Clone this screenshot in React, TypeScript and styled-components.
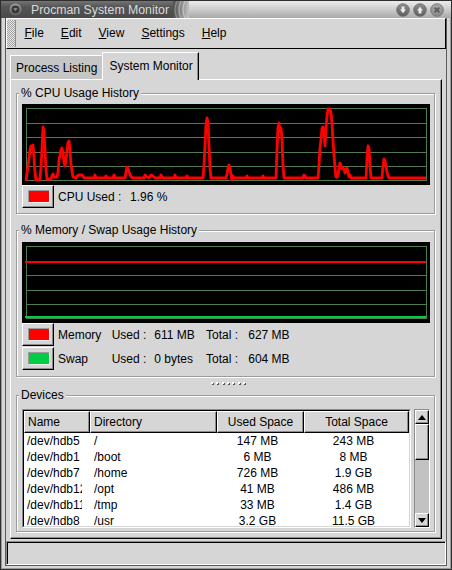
import React from "react";
import styled, { createGlobalStyle } from "styled-components";

const BG = "#d6d6d6";
const SHADE = "#8c8c8c";

const GlobalStyle = createGlobalStyle`
  * { box-sizing: border-box; }
  html, body { margin: 0; padding: 0; }
  body {
    background: ${BG};
    font-family: "Liberation Sans", Arial, Helvetica, sans-serif;
    font-size: 12px;
    color: #000;
  }
`;

const Window = styled.div`
  width: 452px;
  height: 570px;
  display: flex;
  flex-direction: column;
  background: ${BG};
  border: 1px solid #2e2e2e;
  box-shadow: inset 1px 0 0 #9a9a9a, inset -1px -1px 0 #9a9a9a;
  overflow: hidden;
`;

const TitleBar = styled.div`
  flex: none;
  height: 17px;
  display: flex;
`;

const TitleLeft = styled.div`
  width: 172px;
  display: flex;
  align-items: center;
  gap: 9px;
  padding-left: 8px;
  background: linear-gradient(#747474, #555 35%, #4a4a4a);
  color: #dadada;
  font-size: 12.3px;
  white-space: nowrap;
`;

const TitleRight = styled.div`
  flex: 1;
  display: flex;
  align-items: center;
  padding-right: 7px;
  background: linear-gradient(#ececec, #c8c8c8 55%, #a8a8a8);
`;

const TitleSpacer = styled.div`
  flex: 1;
`;

const TitleButtons = styled.div`
  display: flex;
  gap: 3px;
`;

const Client = styled.div`
  flex: 1;
  min-height: 0;
  display: flex;
  flex-direction: column;
  margin: 0 4px 3px 4px;
  border: 1px solid #5a5a5a;
  border-top: none;
`;

const MenuBar = styled.div`
  flex: none;
  height: 31px;
  display: flex;
  align-items: center;
  border-top: 1px solid #fff;
  border-left: 1px solid #fff;
  border-right: 1px solid #000;
  border-bottom: 1px solid #000;
`;

const Handle = styled.div`
  align-self: stretch;
  width: 9px;
  margin: 1px 0;
  border-right: 1px solid ${SHADE};
  background-color: #e4e4e4;
  background-image: repeating-conic-gradient(#a4a4a4 0 25%, transparent 0 50%);
  background-size: 2px 2px;
`;

const MenuItem = styled.div`
  padding: 0 8.5px;
  line-height: 15px;
  white-space: nowrap;
  &:first-of-type {
    padding-left: 9px;
  }
  u {
    text-decoration: underline;
    text-underline-offset: 1px;
  }
`;

const Notebook = styled.div`
  flex: 1;
  min-height: 0;
  display: flex;
  flex-direction: column;
  padding: 3px 4px 0 4px;
`;

const TabRow = styled.div`
  flex: none;
  height: 27px;
  display: flex;
  align-items: flex-end;
`;

const Tab = styled.div<{ $active?: boolean }>`
  position: relative;
  z-index: ${(p) => (p.$active ? 1 : 0)};
  height: ${(p) => (p.$active ? 28 : 24)}px;
  margin-bottom: ${(p) => (p.$active ? -1 : 0)}px;
  padding: ${(p) => (p.$active ? "0 5px 2px 6px" : "1px 4px 0 5px")};
  display: flex;
  align-items: center;
  white-space: nowrap;
  background: ${(p) => (p.$active ? BG : "#c6c6c6")};
  border-top: 1px solid #fff;
  border-left: 1px solid #fff;
  border-right: 1px solid ${(p) => (p.$active ? "#000" : "#c6c6c6")};
  box-shadow: ${(p) => (p.$active ? `inset -1px 0 0 ${SHADE}` : "none")};
`;

const Panel = styled.div`
  flex: 1;
  min-height: 0;
  display: flex;
  flex-direction: column;
  padding: 6px 5px 6px 5px;
  border-top: 1px solid #fff;
  border-left: 1px solid #fff;
  border-right: 1px solid #000;
  border-bottom: 1px solid #000;
  box-shadow: inset -1px -1px 0 ${SHADE};
`;

const Frame = styled.fieldset<{ $gap?: number }>`
  flex: none;
  min-width: 0;
  margin: ${(p) => p.$gap ?? 0}px 1px 0 0;
  padding: 0;
  border: 1px solid #9c9c9c;
  box-shadow: 1px 1px 0 #fff, inset 1px 1px 0 #fff;
`;

const Legend = styled.legend`
  margin-left: 2px;
  padding: 0 2px;
  line-height: 15px;
  font-size: 12px;
  background: ${BG};
  white-space: nowrap;
`;

const FrameBody = styled.div<{ $top?: number; $bottom?: number }>`
  display: flex;
  flex-direction: column;
  padding: ${(p) => p.$top ?? 3}px 4px ${(p) => p.$bottom ?? 5}px 5px;
`;

const GraphSvg = styled.svg`
  display: block;
  flex: none;
  background: #000;
`;

const InfoRow = styled.div`
  height: 23px;
  display: flex;
  align-items: center;
`;

const MemRow = styled.div<{ $gap?: number }>`
  height: 23px;
  margin-top: ${(p) => p.$gap ?? 0}px;
  display: grid;
  grid-template-columns: 36px 53.7px 42.6px 51.7px 42.3px 1fr;
  align-items: center;
  white-space: nowrap;
`;

const ColorButton = styled.div`
  width: 32px;
  height: 23px;
  display: flex;
  align-items: center;
  justify-content: center;
  padding-left: 2px;
  background: ${BG};
  border-top: 1px solid #fff;
  border-left: 1px solid #fff;
  border-right: 1px solid #000;
  border-bottom: 1px solid #000;
  box-shadow: inset -1px -1px 0 ${SHADE};
`;

const Swatch = styled.div<{ $c: string }>`
  width: 22px;
  height: 13px;
  background: ${(p) => p.$c};
  border: 1px solid;
  border-color: #9a9a9a #f4f4f4 #f4f4f4 #9a9a9a;
`;

const CpuLabel = styled.span`
  width: 72px;
  margin-left: 4px;
  white-space: nowrap;
`;

const Text = styled.span`
  white-space: nowrap;
`;

const PaneHandle = styled.div`
  flex: none;
  height: 11px;
  display: flex;
  align-items: center;
  justify-content: center;
  gap: 3.4px;
  padding-left: 4px;
`;

const Dot = styled.span`
  width: 2px;
  height: 2px;
  background: #fff;
  box-shadow: 1px 1px 0 #555;
`;

const TreeArea = styled.div`
  height: 119px;
  display: flex;
  gap: 3px;
`;

const ListOuter = styled.div`
  width: 389px;
  border: 1px solid;
  border-color: ${SHADE} #fff #fff ${SHADE};
`;

const ListInner = styled.div`
  height: 100%;
  overflow: hidden;
  background: #fff;
  border: 1px solid;
  border-color: #000 ${BG} ${BG} #000;
`;

const COLS = "66px 127px 87px 105px";

const HeaderRow = styled.div`
  display: grid;
  grid-template-columns: ${COLS};
  height: 22px;
  background: ${BG};
`;

const HeadCell = styled.div<{ $center?: boolean }>`
  display: flex;
  align-items: center;
  justify-content: ${(p) => (p.$center ? "center" : "flex-start")};
  padding-left: ${(p) => (p.$center ? 0 : 3)}px;
  white-space: nowrap;
  overflow: hidden;
  border-top: 1px solid #fff;
  border-left: 1px solid #fff;
  border-right: 1px solid #000;
  border-bottom: 1px solid #000;
  box-shadow: inset -1px -1px 0 ${SHADE};
`;

const Row = styled.div`
  display: grid;
  grid-template-columns: ${COLS};
  height: 16px;
  align-items: center;
`;

const Cell = styled.div<{ $center?: boolean; $pad?: number; $clip?: number }>`
  min-width: 0;
  overflow: hidden;
  white-space: nowrap;
  text-overflow: clip;
  text-align: ${(p) => (p.$center ? "center" : "left")};
  padding-left: ${(p) => (p.$center ? 0 : p.$pad ?? 3)}px;
  padding-right: ${(p) => p.$clip ?? 6}px;
  line-height: 16px;
`;

const CellText = styled.span`
  display: block;
  overflow: hidden;
  white-space: nowrap;
`;

const Scrollbar = styled.div`
  width: 16px;
  display: flex;
  flex-direction: column;
  background: #c2c2c2;
  border: 1px solid;
  border-color: ${SHADE} #fff #fff ${SHADE};
`;

const ScrollPart = styled.div<{ $h: number }>`
  flex: none;
  height: ${(p) => p.$h}px;
  display: flex;
  align-items: center;
  justify-content: center;
  background: ${BG};
  border-top: 1px solid #fff;
  border-left: 1px solid #fff;
  border-right: 1px solid #000;
  border-bottom: 1px solid #000;
  box-shadow: inset -1px -1px 0 ${SHADE};
`;

const ScrollSpace = styled.div`
  flex: 1;
`;

const StatusBar = styled.div`
  flex: none;
  height: 24px;
  margin-top: 2px;
  border: 1px solid;
  border-color: ${SHADE} #fff #fff ${SHADE};
  box-shadow: inset 1px 1px 0 #000;
`;

/* ---------- drawings ---------- */

function MenuIcon() {
  return (
    <svg width="13" height="13" viewBox="0 0 13 13">
      <defs>
        <linearGradient id="mi" x1="0" y1="0" x2="0" y2="1">
          <stop offset="0" stopColor="#a0a0a0" />
          <stop offset="1" stopColor="#606060" />
        </linearGradient>
      </defs>
      <circle cx="6.5" cy="6.5" r="6" fill="url(#mi)" />
      <circle cx="6.5" cy="6.5" r="4" fill="#3a3a3a" />
      <path d="M4.3 5.3 L8.7 5.3 L6.5 7.8 Z" fill="#9a9a9a" />
    </svg>
  );
}

function Stripes() {
  return (
    <svg width="16" height="17" viewBox="0 0 16 17" style={{ display: "block" }}>
      <defs>
        <linearGradient id="st" x1="0" y1="0" x2="1" y2="0">
          <stop offset="0" stopColor="#4c4c4c" />
          <stop offset="1" stopColor="#c4c4c4" />
        </linearGradient>
      </defs>
      <rect width="16" height="17" fill="url(#st)" />
      <path d="M4 0 Q0 8.5 4 17" stroke="#8a8a8a" strokeWidth="1.3" fill="none" />
      <path d="M8 0 Q4 8.5 8 17" stroke="#a8a8a8" strokeWidth="1.3" fill="none" />
      <path d="M12 0 Q8 8.5 12 17" stroke="#c0c0c0" strokeWidth="1.3" fill="none" />
    </svg>
  );
}

function WinButton({ kind }: { kind: "min" | "max" | "close" }) {
  const id = `wb-${kind}`;
  return (
    <svg width="14" height="14" viewBox="0 0 14 14" style={{ display: "block" }}>
      <defs>
        <linearGradient id={id} x1="0" y1="0" x2="0" y2="1">
          <stop offset="0" stopColor={kind === "close" ? "#a8a8a8" : "#8e8e8e"} />
          <stop offset="1" stopColor={kind === "close" ? "#8a8a8a" : "#5e5e5e"} />
        </linearGradient>
      </defs>
      <circle cx="7" cy="7" r="6.3" fill={`url(#${id})`} stroke="#6a6a6a" strokeWidth="0.8" />
      {kind === "min" && (
        <path d="M5.6 3.5 H8.4 V6.6 H10 L7 10.2 L4 6.6 H5.6 Z" fill="#ececec" />
      )}
      {kind === "max" && (
        <path d="M5.6 10.5 H8.4 V7.4 H10 L7 3.8 L4 7.4 H5.6 Z" fill="#ececec" />
      )}
      {kind === "close" && (
        <path d="M4.6 4.6 L9.4 9.4 M9.4 4.6 L4.6 9.4" stroke="#5a5a5a" strokeWidth="1.6" />
      )}
    </svg>
  );
}

function Arrow({ up }: { up?: boolean }) {
  return (
    <svg width="8" height="5" viewBox="0 0 8 5" style={{ display: "block" }}>
      <path d={up ? "M0 5 L4 0 L8 5 Z" : "M0 0 L4 5 L8 0 Z"} fill="#000" />
    </svg>
  );
}

const GRID_Y = [19.5, 33.5, 48.5, 62.5];

function GraphGrid() {
  return (
    <g stroke="#4e7c4e" strokeWidth="1" fill="none">
      <rect x="4.5" y="4.5" width="400" height="72" />
      {GRID_Y.map((y) => (
        <line key={y} x1="4.5" x2="404.5" y1={y} y2={y} />
      ))}
    </g>
  );
}

const CPU_POINTS: [number, number][] = [
  [26, 181], [27, 173], [28, 166], [29, 158], [30, 150], [31, 146], [32, 149], [33, 145], [34, 158],
  [35, 172], [36, 180], [39, 180], [40, 178], [41, 168], [42, 148], [43, 127], [44, 131], [45, 150],
  [46, 170], [47, 179], [51, 179], [52, 176], [53, 174], [54, 177], [57, 177], [58, 172], [59, 160],
  [60, 155], [61, 150], [62, 148], [63, 152], [64, 162], [65, 166], [66, 160], [67, 150], [68, 143],
  [69, 141], [70, 150], [71, 165], [73, 177], [76, 178], [77, 176], [79, 175], [82, 175], [84, 178],
  [94, 178], [95, 175], [96, 178], [105, 178], [106, 176], [107, 178], [113, 178], [114, 175],
  [115, 178], [125, 178], [126, 172], [127, 167], [128, 168], [129, 172], [131, 177], [133, 178],
  [144, 178], [145, 175], [147, 177], [149, 178], [151, 175], [153, 176], [155, 178], [160, 178],
  [161, 175], [163, 178], [174, 178], [175, 175], [176, 178], [186, 178], [187, 176], [188, 178],
  [203, 178], [204, 165], [205, 145], [206, 125], [207, 118], [208, 122], [209, 145], [210, 168],
  [211, 178], [226, 178], [227, 174], [228, 168], [229, 165], [230, 168], [231, 175], [232, 180],
  [233, 176], [234, 178], [246, 178], [247, 176], [248, 178], [262, 178], [263, 176], [264, 178],
  [276, 178], [277, 150], [278, 127], [279, 123], [280, 131], [281, 128], [282, 140], [283, 165],
  [284, 178], [303, 178], [304, 175], [305, 176], [306, 178], [318, 178], [319, 165], [320, 148],
  [321, 140], [322, 128], [323, 127], [324, 131], [325, 146], [326, 128], [327, 116], [328, 109],
  [330, 109], [331, 113], [332, 124], [333, 140], [334, 155], [335, 168], [336, 177], [337, 177],
  [338, 175], [339, 168], [340, 163], [341, 166], [342, 169], [343, 168], [344, 169], [345, 173],
  [346, 170], [347, 168], [348, 172], [349, 177], [350, 175], [351, 178], [366, 178], [367, 158],
  [368, 146], [369, 148], [370, 165], [371, 178], [382, 178], [383, 166], [384, 159], [385, 161],
  [386, 166], [387, 172], [388, 176], [389, 178], [426, 178],
];

function CpuGraph() {
  const pts = CPU_POINTS.map(([x, y]) => `${x - 22},${y - 104}`).join(" ");
  return (
    <GraphSvg width="408" height="81" viewBox="0 0 408 81">
      <GraphGrid />
      <polyline points={pts} fill="none" stroke="#ff0000" strokeWidth="2.8" strokeLinejoin="round" />
    </GraphSvg>
  );
}

function MemGraph() {
  return (
    <GraphSvg width="408" height="81" viewBox="0 0 408 81">
      <GraphGrid />
      <line x1="3" x2="404" y1="20" y2="20" stroke="#ff0000" strokeWidth="2" />
      <line x1="3" x2="404" y1="75" y2="75" stroke="#00cc44" strokeWidth="2" />
    </GraphSvg>
  );
}

const DEVICES = [
  ["/dev/hdb5", "/", "147 MB", "243 MB"],
  ["/dev/hdb1", "/boot", "6 MB", "8 MB"],
  ["/dev/hdb7", "/home", "726 MB", "1.9 GB"],
  ["/dev/hdb12", "/opt", "41 MB", "486 MB"],
  ["/dev/hdb11", "/tmp", "33 MB", "1.4 GB"],
  ["/dev/hdb8", "/usr", "3.2 GB", "11.5 GB"],
];

const MENUS = ["File", "Edit", "View", "Settings", "Help"];

export default function App() {
  return (
    <>
      <GlobalStyle />
      <Window>
        <TitleBar>
          <TitleLeft>
            <MenuIcon />
            <span>Procman System Monitor</span>
          </TitleLeft>
          <TitleRight>
            <Stripes />
            <TitleSpacer />
            <TitleButtons>
              <WinButton kind="min" />
              <WinButton kind="max" />
              <WinButton kind="close" />
            </TitleButtons>
          </TitleRight>
        </TitleBar>
        <Client>
          <MenuBar>
            <Handle />
            {MENUS.map((m) => (
              <MenuItem key={m}>
                <u>{m[0]}</u>
                {m.slice(1)}
              </MenuItem>
            ))}
          </MenuBar>
          <Notebook>
            <TabRow>
              <Tab>Process Listing</Tab>
              <Tab $active>System Monitor</Tab>
            </TabRow>
            <Panel>
              <Frame>
                <Legend>% CPU Usage History</Legend>
                <FrameBody>
                  <CpuGraph />
                  <InfoRow>
                    <ColorButton>
                      <Swatch $c="#ff0000" />
                    </ColorButton>
                    <CpuLabel>CPU Used :</CpuLabel>
                    <Text>1.96 %</Text>
                  </InfoRow>
                </FrameBody>
              </Frame>
              <Frame $gap={9}>
                <Legend>% Memory / Swap Usage History</Legend>
                <FrameBody $top={4} $bottom={6}>
                  <MemGraph />
                  <MemRow>
                    <ColorButton>
                      <Swatch $c="#ff0000" />
                    </ColorButton>
                    <Text>Memory</Text>
                    <Text>Used :</Text>
                    <Text>611 MB</Text>
                    <Text>Total :</Text>
                    <Text>627 MB</Text>
                  </MemRow>
                  <MemRow $gap={1}>
                    <ColorButton>
                      <Swatch $c="#00cc44" />
                    </ColorButton>
                    <Text>Swap</Text>
                    <Text>Used :</Text>
                    <Text>0 bytes</Text>
                    <Text>Total :</Text>
                    <Text>604 MB</Text>
                  </MemRow>
                </FrameBody>
              </Frame>
              <PaneHandle>
                {Array.from({ length: 7 }).map((_, i) => (
                  <Dot key={i} />
                ))}
              </PaneHandle>
              <Frame>
                <Legend>Devices</Legend>
                <FrameBody $top={6} $bottom={3}>
                  <TreeArea>
                    <ListOuter>
                      <ListInner>
                        <HeaderRow>
                          <HeadCell>Name</HeadCell>
                          <HeadCell>Directory</HeadCell>
                          <HeadCell $center>Used Space</HeadCell>
                          <HeadCell $center>Total Space</HeadCell>
                        </HeaderRow>
                        {DEVICES.map((d) => (
                          <Row key={d[0]}>
                            <Cell $clip={8}>
                              <CellText>{d[0]}</CellText>
                            </Cell>
                            <Cell $pad={4}>
                              <CellText>{d[1]}</CellText>
                            </Cell>
                            <Cell $center>{d[2]}</Cell>
                            <Cell $center>{d[3]}</Cell>
                          </Row>
                        ))}
                      </ListInner>
                    </ListOuter>
                    <Scrollbar>
                      <ScrollPart $h={14}>
                        <Arrow up />
                      </ScrollPart>
                      <ScrollPart $h={36} />
                      <ScrollSpace />
                      <ScrollPart $h={14}>
                        <Arrow />
                      </ScrollPart>
                    </Scrollbar>
                  </TreeArea>
                </FrameBody>
              </Frame>
            </Panel>
          </Notebook>
          <StatusBar />
        </Client>
      </Window>
    </>
  );
}
